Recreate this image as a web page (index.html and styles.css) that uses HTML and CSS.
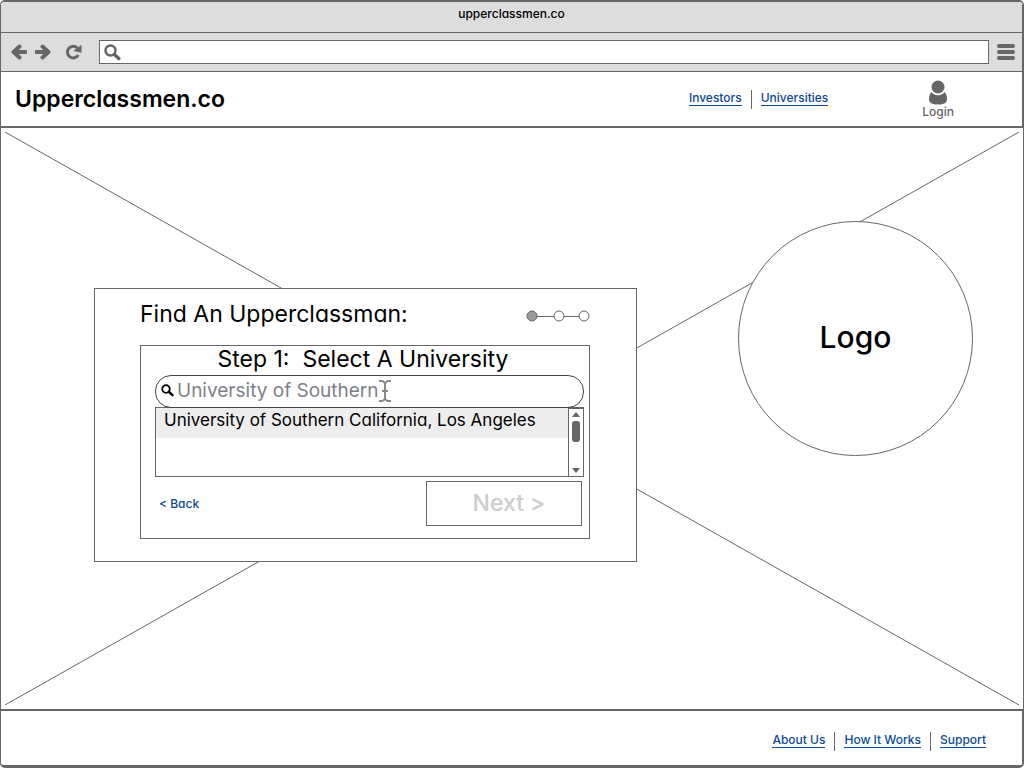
FILE: index.html
```html
<!DOCTYPE html>
<html lang="en">
<head>
<meta charset="utf-8">
<meta name="viewport" content="width=device-width, initial-scale=1">
<title>upperclassmen.co</title>
<link rel="stylesheet" href="styles.css">
</head>
<body>
<div class="window">
  <div class="titlebar">upperclassmen.co</div>
  <div class="toolbar">
    <button class="tool" type="button" aria-label="Back">
      <svg width="16" height="16" viewBox="0 0 16 16"><path d="M8.500 2.500 2.500 8l6 5.500M3 8h11.500" class="arrow"/></svg>
    </button>
    <button class="tool" type="button" aria-label="Forward">
      <svg width="16" height="16" viewBox="0 0 16 16"><path d="M7.500 2.500 13.500 8l-6 5.500M13 8H1.500" class="arrow"/></svg>
    </button>
    <button class="tool tool-reload" type="button" aria-label="Reload">
      <svg width="17" height="16" viewBox="0 0 17 16"><path d="M12.500 4.200A5.800 5.800 0 1 0 13.300 11" class="reload"/><path d="M16.500.8v8L8.300 7z" fill="#666"/></svg>
    </button>
    <label class="address">
      <svg width="17" height="17" viewBox="0 0 17 17"><circle cx="6.500" cy="6.500" r="5" fill="none" stroke="#666" stroke-width="2.500"/><path d="m10.500 10.500 4.300 4" stroke="#666" stroke-width="3.500" stroke-linecap="round"/></svg>
      <input class="address-input" type="text" aria-label="Address">
    </label>
    <button class="tool" type="button" aria-label="Menu">
      <svg width="18" height="16" viewBox="0 0 18 16"><path d="M2 2h14M2 8h14M2 14h14" stroke="#666" stroke-width="4" stroke-linecap="round"/></svg>
    </button>
  </div>

  <header class="header">
    <h1 class="brand">Upperclassmen.co</h1>
    <nav class="links" aria-label="Main">
      <a class="link" href="#investors">Investors</a>
      <a class="link" href="#universities">Universities</a>
    </nav>
    <a class="login" href="#login">
      <svg width="20" height="25" viewBox="0 0 20 25"><path d="M3.500 12C1.500 14 1 16.500 1 19.500 1 22.500 4 24.500 10 24.500s9-2 9-5c0-3-.5-5.500-2.500-7.500-1 2-3.500 3.200-6.500 3.200S4.500 14 3.500 12z" fill="#666"/><circle cx="10" cy="7" r="6.500" fill="#666"/></svg>
      <span>Login</span>
    </a>
  </header>

  <main class="hero">
    <svg class="hero-lines" viewBox="0 0 100 100" preserveAspectRatio="none" aria-hidden="true"><path d="M0 0 100 100M100 0 0 100"/></svg>
    <section class="card">
      <div class="card-head">
        <h2 class="heading">Find An Upperclassman:</h2>
        <svg class="steps" width="64" height="12" viewBox="0 0 64 12" role="img" aria-label="Step 1 of 3"><path d="M6 6.500h52" stroke="#666"/><circle cx="6" cy="6" r="5" fill="#999" stroke="#666"/><circle cx="33" cy="6" r="5" fill="#fff" stroke="#666"/><circle cx="58" cy="6" r="5" fill="#fff" stroke="#666"/></svg>
      </div>
      <form class="panel">
        <h3 class="heading step-title">Step 1:&nbsp; Select A University</h3>
        <label class="search">
          <svg width="13" height="13" viewBox="0 0 13 13"><circle cx="5" cy="5" r="3.800" fill="none" stroke="#000" stroke-width="1.800"/><path d="m8 8 3.500 3.200" stroke="#000" stroke-width="2.400" stroke-linecap="round"/></svg>
          <input class="search-input" type="text" value="University of Southern" aria-label="University">
          <svg class="ibeam" width="12" height="22" viewBox="0 0 12 22" aria-hidden="true"><path d="M0 1h3.500L6 3l2.500-2H12M0 21h3.500L6 19l2.500 2H12M6 3v16M3 11h6"/></svg>
        </label>
        <div class="results">
          <ul class="options" role="listbox" aria-label="Universities">
            <li class="option" role="option" aria-selected="true">University of Southern California, Los Angeles</li>
          </ul>
          <div class="scrollbar">
            <svg width="8" height="5" viewBox="0 0 8 5"><path d="M4 0l4 5H0z" fill="#666"/></svg>
            <span class="thumb"></span>
            <svg width="8" height="5" viewBox="0 0 8 5"><path d="M4 5l4-5H0z" fill="#666"/></svg>
          </div>
        </div>
        <div class="actions">
          <a class="back" href="#back">&lt; Back</a>
          <button class="next" type="button" disabled>Next &gt;</button>
        </div>
      </form>
    </section>
    <div class="logo">Logo</div>
  </main>

  <footer class="footer">
    <nav class="links" aria-label="Footer">
      <a class="link" href="#about">About Us</a>
      <a class="link" href="#how">How It Works</a>
      <a class="link" href="#support">Support</a>
    </nav>
  </footer>
</div>
</body>
</html>
```
FILE: styles.css
```css
* { box-sizing: border-box; }

body {
  margin: 0;
  background: #fff;
  color: #000;
  font: 500 12px/16px Inter, "Liberation Sans", sans-serif;
  font-feature-settings: "cv11";
}

h1, h2, h3, ul { margin: 0; padding: 0; font-weight: 400; }
svg { display: block; flex: none; }
button, input { font: inherit; font-feature-settings: inherit; }

.window {
  display: flex;
  flex-direction: column;
  min-height: 100vh;
  border: 1px solid #666;
  border-width: 2px 1px 3px;
  border-radius: 5px;
  overflow: hidden;
}

.titlebar, .toolbar, .header, .footer { border: 0 solid #666; border-right-width: 1px; }

.titlebar {
  height: 31px;
  padding-top: 4px;
  border-bottom-width: 1px;
  background: #ddd;
  text-align: center;
}

.toolbar {
  display: flex;
  align-items: center;
  gap: 8px;
  height: 39px;
  padding: 0 7px 0 10px;
  border-bottom-width: 1px;
  background: #ddd;
}

.tool { padding: 0; border: 0; background: none; }
.tool-reload { margin: 0 9px 0 6px; }
.arrow { fill: none; stroke: #666; stroke-width: 4; stroke-linecap: round; stroke-linejoin: round; }
.reload { fill: none; stroke: #666; stroke-width: 3; }

.address {
  display: flex;
  align-items: center;
  flex: 1;
  gap: 4px;
  height: 24px;
  padding-left: 4px;
  border: 1px solid #666;
  background: #fff;
}

.address-input { flex: 1; min-width: 0; border: 0; outline: 0; background: none; }

.header {
  display: flex;
  align-items: center;
  height: 56px;
  padding: 0 68px 0 14px;
  border-bottom-width: 2px;
}

.brand { flex: 1; font-size: 23px; font-weight: 600; line-height: 32px; }

.links { display: flex; align-items: center; }
.header .links { padding-bottom: 2px; }
.link { color: #0b4a94; line-height: 14px; text-decoration: none; border-bottom: 1px solid #0b4a94; }
.link + .link { position: relative; margin-left: 19px; }
.link + .link::before {
  content: "";
  position: absolute;
  left: -10px;
  top: -1px;
  height: 19px;
  border-left: 1px solid #666;
}

.login {
  display: flex;
  flex-direction: column;
  align-items: center;
  margin-left: 94px;
  color: #666;
  line-height: 14px;
  text-decoration: none;
}

.hero {
  position: relative;
  display: flex;
  flex: 1;
  align-items: flex-start;
  justify-content: space-between;
  gap: 24px;
  padding: 93px 50px 93px 93px;
}

.hero-lines {
  position: absolute;
  inset: 4px;
  width: calc(100% - 8px);
  height: calc(100% - 8px);
}
.hero-lines path { stroke: #666; vector-effect: non-scaling-stroke; }

.card {
  position: relative;
  flex: 0 1 543px;
  margin-top: 67px;
  padding: 9px 46px 22px 45px;
  border: 1px solid #666;
  background: #fff;
}

.card-head {
  display: flex;
  align-items: center;
  justify-content: space-between;
  padding-bottom: 15px;
}

.steps { margin-top: 4px; }

.heading { font-size: 23px; line-height: 32px; }

.panel { padding: 0 5px 12px 14px; border: 1px solid #666; }
.step-title { line-height: 27px; padding: 0 13px 2px 0; text-align: center; }

.search {
  position: relative;
  display: flex;
  align-items: center;
  gap: 3px;
  height: 33px;
  padding: 0 12px 2px 5px;
  border: 1px solid #444;
  border-radius: 16px;
}

.search-input {
  flex: 1;
  min-width: 0;
  padding: 0;
  border: 0;
  outline: 0;
  background: none;
  color: #80808a;
  font-size: 19px;
  font-weight: 400;
}

.ibeam { position: absolute; left: 223px; top: 4px; fill: none; stroke: #888; stroke-width: 2; }

.results {
  display: flex;
  height: 70px;
  margin-top: -1px;
  border: 1px solid #666;
  background: #fff;
}

.options { flex: 1; min-width: 0; list-style: none; }
.option { height: 30px; padding-left: 8px; background: #ededed; font-size: 17px; line-height: 24px; white-space: nowrap; }

.scrollbar {
  display: flex;
  flex-direction: column;
  align-items: center;
  width: 15px;
  padding: 3px 0 3px;
  border: 1px solid #666;
  border-width: 1px 0 0 1px;
}

.thumb { width: 8px; height: 21px; margin: 4px 0 auto; border-radius: 3px; background: #666; }

.actions {
  display: flex;
  align-items: center;
  justify-content: space-between;
  padding: 4px 2px 0 4px;
}

.back { color: #0b4a94; text-decoration: none; }

.next {
  width: 156px;
  height: 45px;
  padding: 0 0 2px 10px;
  border: 1px solid #666;
  background: #fff;
  color: #ccc;
  font-size: 23px;
}

.logo {
  position: relative;
  display: grid;
  place-items: center;
  flex: none;
  width: 235px;
  height: 235px;
  padding-bottom: 3px;
  border: 1px solid #666;
  border-radius: 50%;
  background: #fff;
  font-size: 30px;
}

.footer {
  display: flex;
  align-items: center;
  justify-content: flex-end;
  height: 56px;
  padding: 4px 36px 0;
  border-top-width: 2px;
}
```
